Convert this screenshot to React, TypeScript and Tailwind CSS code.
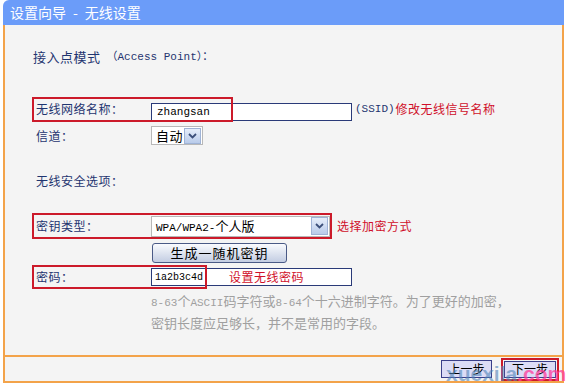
import React from "react";

const CJK = '"Noto Sans CJK SC", "Noto Sans", sans-serif';
const MONO = '"Liberation Mono", "Noto Sans CJK SC", monospace';

function Arrow({ className }: { className: string }) {
  return (
    <div
      className={`flex items-center justify-center border border-[#9fb3d6] bg-gradient-to-b from-[#e6eefa] to-[#b9cbea] ${className}`}
    >
      <svg width="9" height="6" viewBox="0 0 9 6">
        <path d="M1 1 L4.5 4.5 L8 1" fill="none" stroke="#3b4f7a" strokeWidth="1.8" />
      </svg>
    </div>
  );
}

export default function App() {
  return (
    <div className="relative h-[385px] w-[567px] bg-white" style={{ fontFamily: CJK }}>
      <div className="ml-[3px] w-[561px]">
        {/* header */}
        <div className="flex h-[25px] items-center rounded-tl-[6px] bg-[#6b9cf9] pl-[7px] text-[14px] text-white">
          <span>设置向导</span>
          <span className="mx-[7px]">-</span>
          <span>无线设置</span>
        </div>
        {/* body */}
        <div className="flex h-[330px] flex-col border-l-2 border-r-2 border-[#f3a34a] bg-[#f4f4f4] text-[12px] tracking-[0.5px] text-[#1f3570]">
          <div className="mt-[22px] flex h-[20px] items-center pl-[28px]">
            <span className="text-[13px]">接入点模式</span>
            <span className="ml-[6px] tracking-normal" style={{ fontFamily: MONO, fontSize: "11px" }}>
              （Access Point）：
            </span>
          </div>

          {/* SSID row */}
          <div className="relative mt-[30px] flex h-[25px] items-end pb-[1px] pl-[31px]">
            <span className="w-[115px] self-center">无线网络名称：</span>
            <div
              className="flex h-[18px] w-[201px] items-center border border-[#2a3a78] bg-white pl-[5px] text-[11px] tracking-normal text-black"
              style={{ fontFamily: MONO }}
            >
              zhangsan
            </div>
            <span className="ml-[3px] self-center text-[11px] tracking-normal" style={{ fontFamily: MONO }}>
              (SSID)
            </span>
            <span className="ml-[1px] self-center text-[12px] text-[#d0102a]">修改无线信号名称</span>
            <div className="pointer-events-none absolute left-[27px] top-0 h-[25px] w-[201px] border-2 border-[#cc1a2a]" />
          </div>

          {/* channel row */}
          <div className="mt-[4px] flex h-[19px] items-center pl-[31px]">
            <span className="w-[115px]">信道：</span>
            <div className="flex h-[19px] w-[52px] items-center border border-[#b8b8b8] bg-white pl-[4px] pr-[1px] text-[13px] text-black">
              <span className="flex-1">自动</span>
              <Arrow className="h-[16px] w-[17px]" />
            </div>
          </div>

          <div className="mt-[26px] flex h-[20px] items-center pl-[31px]">无线安全选项：</div>

          {/* key type row */}
          <div className="relative mt-[22px] flex h-[26px] items-center pl-[31px]">
            <span className="w-[115px]">密钥类型：</span>
            <div className="flex h-[21px] w-[179px] items-center border border-[#b8b8b8] bg-white pl-[4px] pr-[1px] text-[13px] tracking-normal text-black">
              <span className="flex-1">
                <span style={{ fontFamily: MONO, fontSize: "11px" }}>WPA/WPA2-</span>个人版
              </span>
              <Arrow className="h-[18px] w-[17px]" />
            </div>
            <span className="ml-[7px] text-[12px] text-[#d0102a]">选择加密方式</span>
            <div className="pointer-events-none absolute left-[27px] top-0 h-[26px] w-[300px] border-2 border-[#cc1a2a]" />
          </div>

          {/* generate button */}
          <div className="mt-[4px] flex h-[20px] pl-[147px]">
            <div className="flex h-[20px] w-[135px] items-center justify-center rounded-[3px] border border-[#4a5a86] bg-gradient-to-b from-[#fafbfe] to-[#c3cde2] text-[13px] tracking-[1px] text-black">
              生成一随机密钥
            </div>
          </div>

          {/* password row */}
          <div className="relative mt-[2px] flex h-[24px] items-center pl-[31px]">
            <span className="w-[115px]">密码：</span>
            <div className="flex h-[18px] w-[201px] items-center border border-[#2a3a78] bg-white pl-[3px] tracking-normal text-black">
              <span className="text-[10px]" style={{ fontFamily: MONO }}>
                1a2b3c4d
              </span>
              <span className="ml-[26px] text-[12px] tracking-[0.5px] text-[#d0102a]">设置无线密码</span>
            </div>
            <div className="pointer-events-none absolute left-[27px] top-0 h-[24px] w-[175px] border-2 border-[#cc1a2a]" />
          </div>

          <div className="mt-[2px] pl-[146px] text-[13px] leading-[20px] tracking-normal text-[#a0a0a0]">
            <div>
              <span style={{ fontFamily: MONO, fontSize: "11px" }}>8-63</span>个
              <span style={{ fontFamily: MONO, fontSize: "11px" }}>ASCII</span>码字符或
              <span style={{ fontFamily: MONO, fontSize: "11px" }}>8-64</span>个十六进制字符。为了更好的加密，
            </div>
            <div>密钥长度应足够长，并不是常用的字段。</div>
          </div>
        </div>
        {/* footer */}
        <div className="flex h-[28px] items-center justify-end gap-[9px] border-x-2 border-y-2 border-[#f3a34a] bg-[#f4f4f4] pr-[3px]">
          <div className="flex h-[18px] w-[51px] items-center justify-center border border-[#3a3f8a] bg-[#dcdcf6] text-[12px] text-black">
            上一步
          </div>
          <div className="flex h-[23px] w-[58px] items-center justify-center border-2 border-[#cc1a2a]">
            <div className="flex h-[17px] w-[52px] items-center justify-center border border-[#3a3f8a] bg-[#dcdcf6] text-[12px] text-black">
              下一步
            </div>
          </div>
        </div>
      </div>
      {/* watermark */}
      <div
        className="pointer-events-none absolute left-[446px] top-[362px] text-[21px] font-bold leading-[24px]"
        style={{ fontFamily: '"Liberation Sans", sans-serif' }}
      >
        <span className="text-[#4f86b8]/60">xuexila</span>
        <span className="text-[#ff3d9a]/75">.com</span>
      </div>
    </div>
  );
}
